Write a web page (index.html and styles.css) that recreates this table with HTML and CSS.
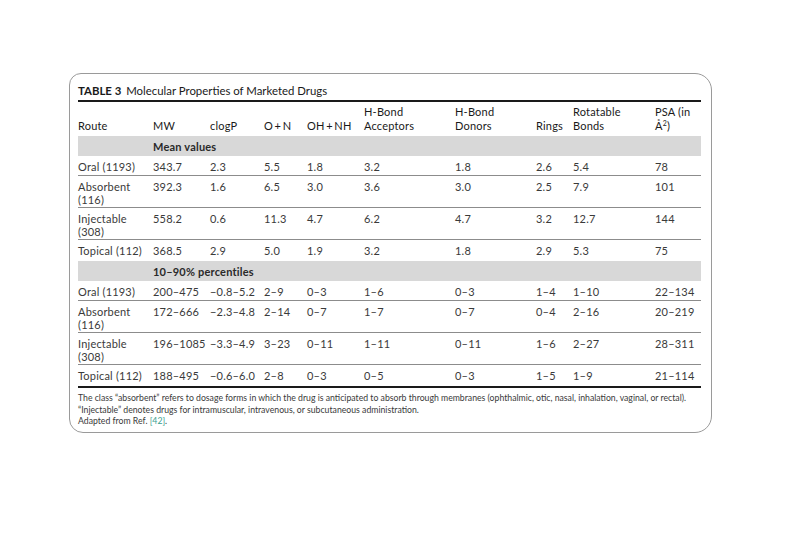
FILE: index.html
```html
<!DOCTYPE html>
<html>
<head>
<meta charset="utf-8">
<link rel="stylesheet" href="styles.css">
</head>
<body>
<div class="card">
  <div class="title"><b>TABLE 3</b> Molecular Properties of Marketed Drugs</div>
  <table class="props">
    <colgroup>
      <col class="c-route"><col class="c-mw"><col class="c-clogp"><col class="c-on"><col class="c-ohnh">
      <col class="c-acc"><col class="c-don"><col class="c-rings"><col class="c-rot"><col class="c-psa">
    </colgroup>
    <thead>
      <tr>
        <th>Route</th><th>MW</th><th>clogP</th><th>O&#8201;+&#8201;N</th><th>OH&#8201;+&#8201;NH</th>
        <th>H-Bond<br>Acceptors</th><th>H-Bond<br>Donors</th><th>Rings</th><th>Rotatable<br>Bonds</th><th>PSA (in<br>Å<sup>2</sup>)</th>
      </tr>
    </thead>
    <tbody>
      <tr class="band"><td></td><td colspan="9">Mean values</td></tr>
      <tr class="one"><td>Oral (1193)</td><td>343.7</td><td>2.3</td><td>5.5</td><td>1.8</td><td>3.2</td><td>1.8</td><td>2.6</td><td>5.4</td><td>78</td></tr>
      <tr><td>Absorbent<br>(116)</td><td>392.3</td><td>1.6</td><td>6.5</td><td>3.0</td><td>3.6</td><td>3.0</td><td>2.5</td><td>7.9</td><td>101</td></tr>
      <tr><td>Injectable<br>(308)</td><td>558.2</td><td>0.6</td><td>11.3</td><td>4.7</td><td>6.2</td><td>4.7</td><td>3.2</td><td>12.7</td><td>144</td></tr>
      <tr class="last"><td>Topical (112)</td><td>368.5</td><td>2.9</td><td>5.0</td><td>1.9</td><td>3.2</td><td>1.8</td><td>2.9</td><td>5.3</td><td>75</td></tr>
      <tr class="band"><td></td><td colspan="9">10–90% percentiles</td></tr>
      <tr class="one"><td>Oral (1193)</td><td>200–475</td><td>−0.8–5.2</td><td>2–9</td><td>0–3</td><td>1–6</td><td>0–3</td><td>1–4</td><td>1–10</td><td>22–134</td></tr>
      <tr><td>Absorbent<br>(116)</td><td>172–666</td><td>−2.3–4.8</td><td>2–14</td><td>0–7</td><td>1–7</td><td>0–7</td><td>0–4</td><td>2–16</td><td>20–219</td></tr>
      <tr><td>Injectable<br>(308)</td><td>196–1085</td><td>−3.3–4.9</td><td>3–23</td><td>0–11</td><td>1–11</td><td>0–11</td><td>1–6</td><td>2–27</td><td>28–311</td></tr>
      <tr class="end"><td>Topical (112)</td><td>188–495</td><td>−0.6–6.0</td><td>2–8</td><td>0–3</td><td>0–5</td><td>0–3</td><td>1–5</td><td>1–9</td><td>21–114</td></tr>
    </tbody>
  </table>
  <div class="notes">
    <p>The class “absorbent” refers to dosage forms in which the drug is anticipated to absorb through membranes (ophthalmic, otic, nasal, inhalation, vaginal, or rectal).</p>
    <p>“Injectable” denotes drugs for intramuscular, intravenous, or subcutaneous administration.</p>
    <p>Adapted from Ref. <span class="ref">[42]</span>.</p>
  </div>
</div>
</body>
</html>
```
FILE: styles.css
```css
html, body {
  margin: 0;
  padding: 0;
  background: #ffffff;
}
body {
  padding: 73px 0 0 69px;
  font-family: "Lato", "Open Sans", sans-serif;
  color: #3a3a3a;
}
.card {
  box-sizing: border-box;
  width: 643px;
  height: 360px;
  border: 1px solid #9a9a9a;
  border-radius: 12px 17px 17px 14px;
  padding: 9px 10px 0 8px;
}
.title {
  font-size: 11.4px;
  line-height: 16px;
  color: #1a1a1a;
  padding-bottom: 1px;
}
.title b {
  font-weight: 700;
  margin-right: 2px;
}
.props {
  width: 623px;
  table-layout: fixed;
  border-collapse: collapse;
  border-top: 2px solid #1a1a1a;
  border-bottom: 2px solid #1a1a1a;
  font-size: 11px;
  letter-spacing: 0.2px;
}
.c-route { width: 75px; }
.c-mw { width: 57px; }
.c-clogp { width: 54px; }
.c-on { width: 43px; }
.c-ohnh { width: 57px; }
.c-acc { width: 91px; }
.c-don { width: 81px; }
.c-rings { width: 37px; }
.c-rot { width: 82px; }
.c-psa { width: 46px; }
.props th {
  font-weight: 400;
  color: #1a1a1a;
  text-align: left;
  vertical-align: bottom;
  line-height: 14px;
  padding: 3px 0 3px 0;
  white-space: nowrap;
}
.props th sup {
  font-size: 7px;
  line-height: 0;
  vertical-align: 4px;
}
.props td {
  text-align: left;
  vertical-align: top;
  line-height: 13px;
  padding: 4px 0 1px 0;
  white-space: nowrap;
}
.props tbody tr {
  border-bottom: 1px solid #8c8c8c;
}
.props tbody tr.band,
.props tbody tr.last,
.props tbody tr.end {
  border-bottom: none;
}
.props tbody tr.one td {
  padding-bottom: 2px;
}
.props tbody tr.last td,
.props tbody tr.end td {
  padding-bottom: 4px;
}
.props tr.band td {
  background: #d8d8d8;
  font-weight: 700;
  color: #2a2a2a;
  padding: 4px 0 3px 0;
}
.notes {
  padding-top: 4px;
  font-size: 8.7px;
  line-height: 11.5px;
  color: #3a3a3a;
}
.notes p {
  margin: 0;
}
.ref {
  color: #3aa191;
}
```
